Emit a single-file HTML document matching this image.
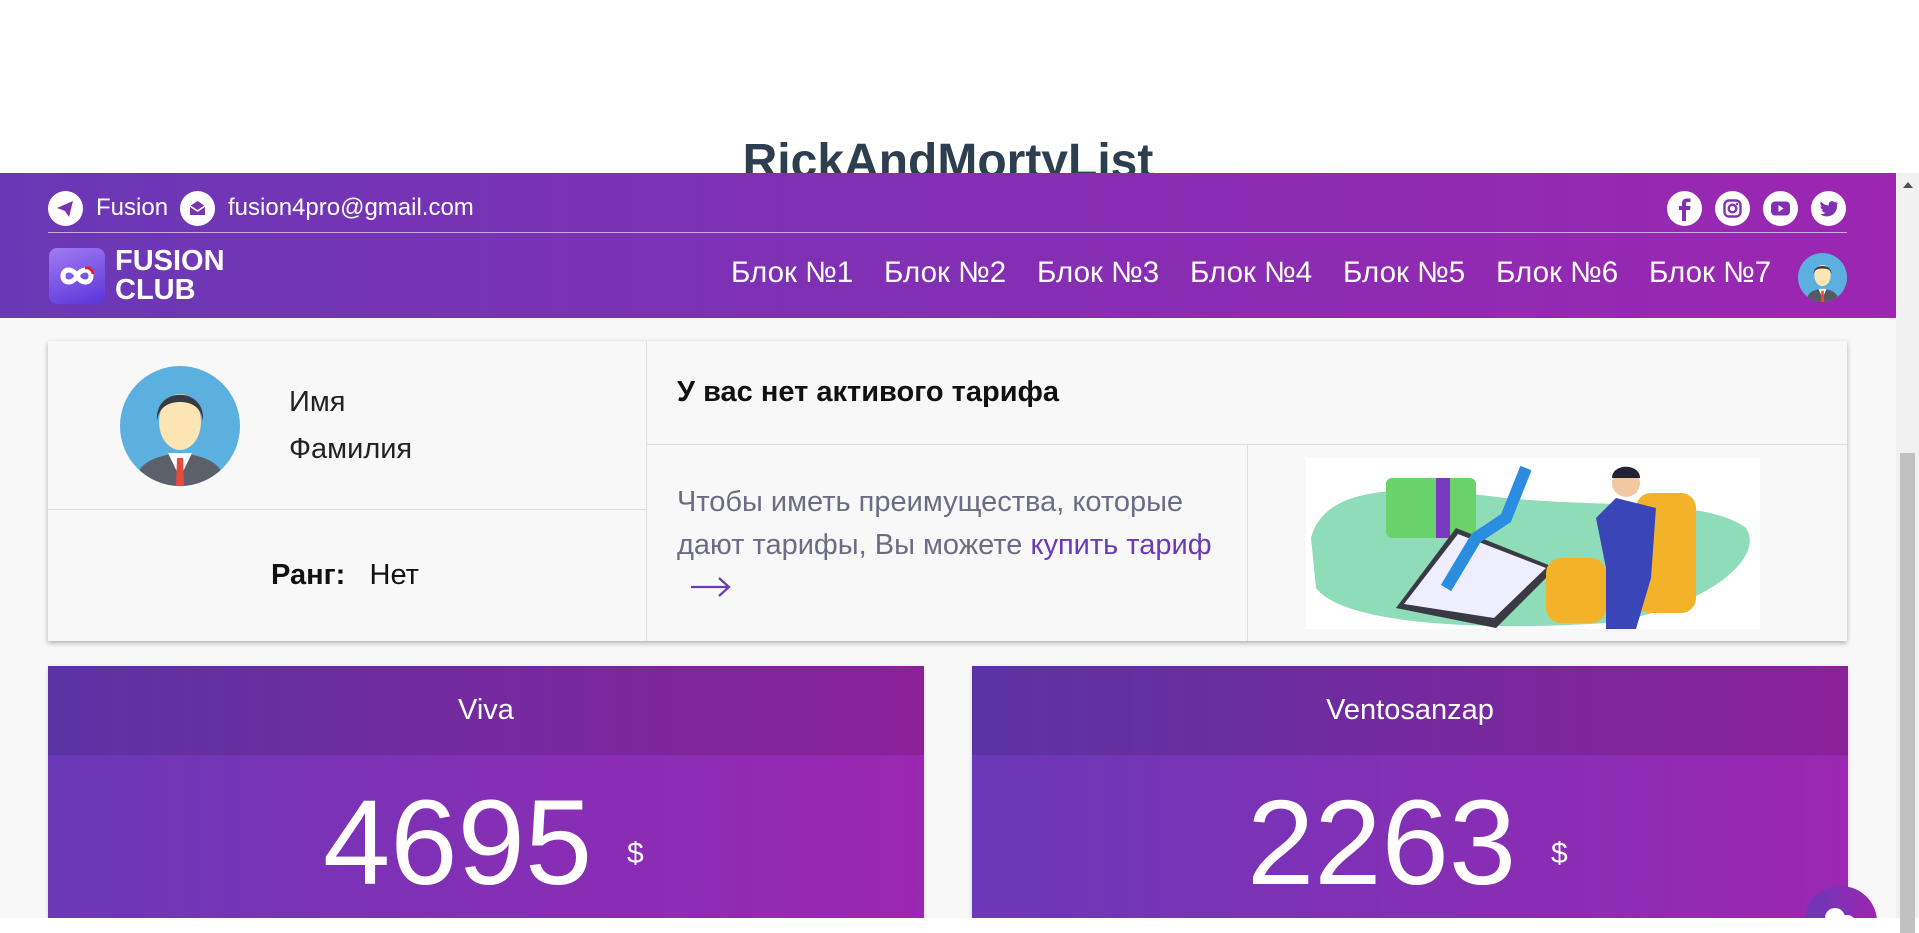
<!DOCTYPE html>
<html><head><meta charset="utf-8">
<style>
*{box-sizing:border-box;margin:0;padding:0}
body{width:1919px;height:918px;overflow:hidden;background:#fff;font-family:"Liberation Sans",Arial,sans-serif;position:relative}
.title{position:absolute;top:134px;left:0;width:1896px;text-align:center;font-size:48px;font-weight:bold;color:#2c3e50}
.frame{position:absolute;top:173px;left:0;width:1896px;height:745px;background:#f8f8f8;overflow:hidden}
.sb{position:absolute;top:173px;left:1896px;width:23px;height:745px;background:#f1f1f1}
.sb .thumb{position:absolute;left:4px;top:280px;width:15px;height:480px;background:#c1c1c1}
.sb .arr{position:absolute;left:7px;top:9px;width:0;height:0;border-left:5px solid transparent;border-right:5px solid transparent;border-bottom:6px solid #505050}
.hdr{position:absolute;top:0;left:0;width:1896px;height:145px;background:linear-gradient(90deg,#6a38b6,#9c26b1)}
.ic{position:absolute;width:35px;height:35px;border-radius:50%;background:#fff}
.top-t{position:absolute;top:21px;color:#fff;font-size:24px}
.line{position:absolute;left:48px;top:59px;width:1799px;height:1px;background:#c9a8e0}
.nav{position:absolute;top:83px;color:#fff;font-size:29.5px}
.card{position:absolute;left:48px;top:168px;width:1799px;height:300px;background:#f8f8f8;box-shadow:0 2px 5px rgba(0,0,0,.3)}
.vl{position:absolute;background:#dedede}
.tc{position:absolute;top:493px;width:876px;height:260px;box-shadow:0 1px 4px rgba(0,0,0,.15)}
.tc .h{height:89px;background:linear-gradient(90deg,#5c33a3,#8b2199);color:#fff;font-size:29px;text-align:center;line-height:89px}
.tc .b{height:200px;background:linear-gradient(90deg,#6b38b8,#9b27b2);color:#fff;position:relative}
.num{position:absolute;top:22px;font-size:121px;line-height:130px}
.dol{position:absolute;top:82px;font-size:30px}
</style></head><body>
<div class="title">RickAndMortyList</div>
<div class="frame">
 <div class="hdr">
  <div class="ic" style="left:48px;top:18px"><svg width="35" height="35" viewBox="0 0 35 35"><path d="M9 17 L25 10 L21 26 L17 20 Z" fill="#7a34b2"/></svg></div>
  <div class="top-t" style="left:96px">Fusion</div>
  <div class="ic" style="left:180px;top:18px"><svg width="35" height="35" viewBox="0 0 35 35"><path d="M10 15 L17.5 10 L25 15 V24 H10 Z" fill="#7a34b2"/><path d="M10 15 L17.5 20 L25 15" stroke="#fff" stroke-width="1.5" fill="none"/></svg></div>
  <div class="top-t" style="left:228px">fusion4pro@gmail.com</div>
  <div class="ic" style="left:1667px;top:18px"><svg width="35" height="35" viewBox="0 0 35 35"><path d="M19 30 V19 H23 L23.5 15 H19 V12.5 C19 11.5 19.5 11 20.5 11 H23.5 V7.5 H20 C16.5 7.5 15 9.5 15 12.5 V15 H12 V19 H15 V30 Z" fill="#7f30b4"/></svg></div>
  <div class="ic" style="left:1715px;top:18px"><svg width="35" height="35" viewBox="0 0 35 35"><rect x="9.5" y="9.5" width="16" height="16" rx="4.5" stroke="#7f30b4" stroke-width="2.4" fill="none"/><circle cx="17.5" cy="17.5" r="3.8" stroke="#7f30b4" stroke-width="2.4" fill="none"/><circle cx="22" cy="13" r="1.2" fill="#7f30b4"/></svg></div>
  <div class="ic" style="left:1763px;top:18px"><svg width="35" height="35" viewBox="0 0 35 35"><rect x="8" y="10.5" width="19" height="14" rx="4" fill="#7f30b4"/><path d="M15.5 14 L20.5 17.5 L15.5 21 Z" fill="#fff"/></svg></div>
  <div class="ic" style="left:1811px;top:18px"><svg width="35" height="35" viewBox="0 0 35 35"><path d="M27 11.5 C26 12 25.2 12.2 24.5 12.3 C25.3 11.8 25.8 11 26.1 10.2 C25.3 10.7 24.5 11 23.6 11.2 C22.1 9.6 19.4 9.8 18.2 11.6 C17.6 12.5 17.5 13.5 17.8 14.5 C14.6 14.3 11.9 12.9 9.9 10.5 C8.9 12.3 9.5 14.5 11.2 15.7 C10.6 15.7 10 15.5 9.5 15.2 C9.5 17.1 10.8 18.6 12.6 19 C12 19.2 11.4 19.2 10.8 19.1 C11.3 20.6 12.8 21.7 14.4 21.7 C12.9 22.9 10.9 23.5 9 23.3 C17.7 28.8 27 23 26 13.4 C26.5 12.9 26.8 12.2 27 11.5 Z" fill="#7f30b4"/></svg></div>
  <div class="line"></div>
  <div style="position:absolute;left:49px;top:75px;width:56px;height:56px;border-radius:8px;background:linear-gradient(160deg,#a07cf4,#5a34d8)"><svg width="56" height="56" viewBox="0 0 56 56"><path d="M14 28 C14 20 24 20 28 28 C32 36 42 36 42 28 C42 20 32 20 28 28 C24 36 14 36 14 28 Z" stroke="#fff" stroke-width="5" fill="none"/><path d="M36 20 C40 19 44 22 44 26" stroke="#e0202a" stroke-width="3" fill="none"/></svg></div>
  <div style="position:absolute;left:115px;top:74px;color:#fff;font-size:29px;font-weight:bold;line-height:29px">FUSION<br>CLUB</div>
  <div class="nav" style="left:731px">Блок №1</div>
  <div class="nav" style="left:884px">Блок №2</div>
  <div class="nav" style="left:1037px">Блок №3</div>
  <div class="nav" style="left:1190px">Блок №4</div>
  <div class="nav" style="left:1343px">Блок №5</div>
  <div class="nav" style="left:1496px">Блок №6</div>
  <div class="nav" style="left:1649px">Блок №7</div>
  <div style="position:absolute;left:1798px;top:80px;width:49px;height:49px;border-radius:50%;background:#5bb0e0;overflow:hidden"><svg width="49" height="49" viewBox="0 0 120 120"><path d="M20 120 C22 98 35 90 60 88 C85 90 98 98 100 120 Z" fill="#56595f"/><path d="M50 88 L60 110 L70 88 Z" fill="#fff"/><path d="M57 92 H63 L64 120 H56 Z" fill="#e84b3a"/><ellipse cx="60" cy="55" rx="20" ry="26" fill="#fde4b3"/><path d="M38 52 C36 25 84 25 82 52 C80 40 70 38 60 38 C50 38 40 40 38 52 Z" fill="#3a3a42"/></svg></div>
 </div>
 <div class="card">
  <div class="vl" style="left:598px;top:0;width:1px;height:300px"></div>
  <div class="vl" style="left:0;top:168px;width:598px;height:1px"></div>
  <div class="vl" style="left:599px;top:103px;width:1200px;height:1px"></div>
  <div class="vl" style="left:1199px;top:103px;width:1px;height:197px"></div>
  <div style="position:absolute;left:72px;top:25px;width:120px;height:120px;border-radius:50%;background:#5bb0e0;overflow:hidden"><svg width="120" height="120" viewBox="0 0 120 120"><path d="M14 120 C16 98 32 90 60 87 C88 90 104 98 106 120 Z" fill="#5c6068"/><path d="M48 87 L60 112 L72 87 Z" fill="#fff"/><path d="M57 92 H63 L64 120 H56 Z" fill="#e84b3a"/><ellipse cx="60" cy="56" rx="21" ry="28" fill="#fde4b3"/><path d="M37 55 C34 20 86 20 83 55 C81 40 70 36 60 36 C50 36 39 40 37 55 Z" fill="#3a3a42"/></svg></div>
  <div style="position:absolute;left:241px;top:45px;font-size:29px;color:#222">Имя</div>
  <div style="position:absolute;left:241px;top:92px;font-size:29px;color:#222">Фамилия</div>
  <div style="position:absolute;left:223px;top:218px;font-size:29px;color:#111"><b>Ранг:</b>&nbsp;&nbsp;&nbsp;Нет</div>
  <div style="position:absolute;left:629px;top:35px;font-size:29px;font-weight:bold;color:#111">У вас нет активого тарифа</div>
  <div style="position:absolute;left:629px;top:140px;width:560px;font-size:29px;line-height:43px;color:#6c6c86">Чтобы иметь преимущества, которые дают тарифы, Вы можете <span style="color:#6a3ab5">купить тариф</span><br><svg width="44" height="24" viewBox="0 0 44 24" style="margin-left:12px;margin-top:8px"><path d="M2 12 H40 M30 3 L40 12 L30 21" stroke="#6a3ab5" stroke-width="2.2" fill="none"/></svg></div>
  <div style="position:absolute;left:1258px;top:117px;width:454px;height:171px;background:#fff;overflow:hidden"><svg width="454" height="171" viewBox="0 0 454 171"><path d="M5 80 C20 20 120 30 200 40 C300 50 400 40 440 70 C460 100 400 150 300 165 C200 172 40 170 10 130 Z" fill="#8fdcb8"/><rect x="80" y="20" width="90" height="60" rx="6" fill="#6ad26a"/><rect x="130" y="20" width="14" height="60" fill="#7a3ac0"/><path d="M90 150 L150 70 L250 110 L190 170 Z" fill="#3a3a44"/><path d="M98 146 L152 76 L240 110 L188 160 Z" fill="#eef"/><path d="M140 130 L170 80 L200 60 L220 10" stroke="#2a8de0" stroke-width="12" fill="none"/><g fill="#f2b22a"><rect x="240" y="100" width="60" height="65" rx="15"/><rect x="330" y="35" width="60" height="120" rx="15"/></g><path d="M290 60 L310 40 L350 50 L345 120 L330 171 L300 171 L300 110 Z" fill="#3a46b8"/><circle cx="320" cy="25" r="14" fill="#f3c8a0"/><path d="M306 20 C306 5 334 5 334 20 Z" fill="#223"/></svg></div>
 </div>
 <div class="tc" style="left:48px">
  <div class="h">Viva</div>
  <div class="b"><div class="num" style="left:275px">4695</div><div class="dol" style="left:579px">$</div></div>
 </div>
 <div class="tc" style="left:972px">
  <div class="h">Ventosanzap</div>
  <div class="b"><div class="num" style="left:275px">2263</div><div class="dol" style="left:579px">$</div></div>
 </div>
 <div style="position:absolute;left:1805px;top:713px;width:72px;height:72px;border-radius:50%;background:linear-gradient(90deg,#6a38b6,#9c26b1)"><svg width="72" height="72" viewBox="0 0 72 72"><circle cx="30" cy="32" r="10" fill="#fff"/><circle cx="42" cy="38" r="9" fill="#fff"/></svg></div>
</div>
<div class="sb"><div class="arr"></div><div class="thumb"></div></div>
</body></html>
